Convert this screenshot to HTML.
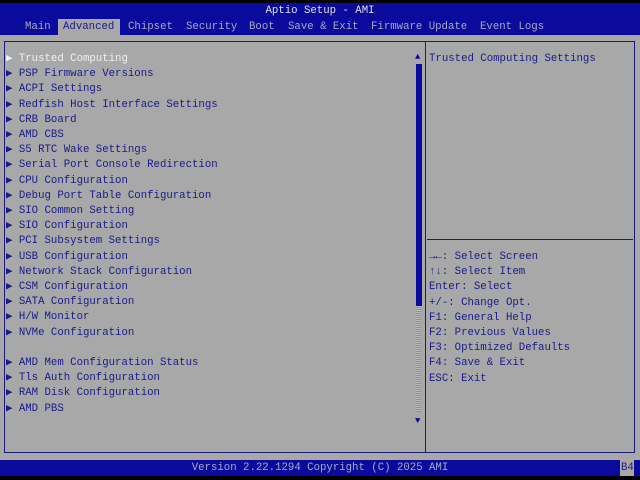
<!DOCTYPE html>
<html><head><style>
body{margin:0;width:640px;height:480px;background:#000;position:relative;overflow:hidden;font-family:"Liberation Mono","DejaVu Sans Mono",monospace;font-size:10.7px;}
div{position:absolute;white-space:pre;}
.t{line-height:15px;}
.tab{top:20px;line-height:15px;color:#a8a8c8}
</style></head><body>
<div style="left:0;top:3px;width:640px;height:32px;background:#0a0a9c"></div>
<div class="t" style="left:0;top:4px;width:640px;text-align:center;color:#e0e0e0">Aptio Setup - AMI</div>
<div style="left:58px;top:19px;width:62px;height:16px;background:#a8a8a8"></div>
<div class="tab" style="left:25px">Main</div>
<div class="tab" style="left:63px;color:#1a1a8a">Advanced</div>
<div class="tab" style="left:128px">Chipset</div>
<div class="tab" style="left:186px">Security</div>
<div class="tab" style="left:249px">Boot</div>
<div class="tab" style="left:288px">Save &amp; Exit</div>
<div class="tab" style="left:371px">Firmware Update</div>
<div class="tab" style="left:480px">Event Logs</div>
<div style="left:0;top:35px;width:640px;height:425px;background:#a8a8a8"></div>
<div style="left:4px;top:41px;width:629px;height:410px;border:1px solid #1a1a7a"></div>
<div style="left:425px;top:42px;width:1px;height:410px;background:#1a1a7a"></div>
<div style="left:427px;top:239px;width:206px;height:1px;background:#1a1a7a"></div>
<div style="left:415px;top:52px;font-size:9px;color:#0a0a9c">▲</div>
<div style="left:415px;top:416px;font-size:9px;color:#0a0a9c">▼</div>
<div style="left:416px;top:64px;width:6px;height:242px;background:#0a0a9c"></div>
<div style="left:416px;top:306px;width:6px;height:106px;background:repeating-linear-gradient(0deg,#909090 0 1px,#b8b8b8 1px 2px)"></div>
<div class="t" style="left:6px;top:52px;color:#1a1a8a;line-height:15.2px"><span style="color:#f0f0f0">▶ Trusted Computing</span>
▶ PSP Firmware Versions
▶ ACPI Settings
▶ Redfish Host Interface Settings
▶ CRB Board
▶ AMD CBS
▶ S5 RTC Wake Settings
▶ Serial Port Console Redirection
▶ CPU Configuration
▶ Debug Port Table Configuration
▶ SIO Common Setting
▶ SIO Configuration
▶ PCI Subsystem Settings
▶ USB Configuration
▶ Network Stack Configuration
▶ CSM Configuration
▶ SATA Configuration
▶ H/W Monitor
▶ NVMe Configuration

▶ AMD Mem Configuration Status
▶ Tls Auth Configuration
▶ RAM Disk Configuration
▶ AMD PBS</div>
<div class="t" style="left:429px;top:52px;color:#1a1a8a">Trusted Computing Settings</div>
<div class="t" style="left:429px;top:250px;color:#1a1a8a;line-height:15.2px">→←: Select Screen
↑↓: Select Item
Enter: Select
+/-: Change Opt.
F1: General Help
F2: Previous Values
F3: Optimized Defaults
F4: Save &amp; Exit
ESC: Exit</div>
<div style="left:0;top:460px;width:640px;height:16px;background:#0a0a9c"></div>
<div class="t" style="left:0;top:461px;width:640px;text-align:center;color:#a8a8c8">Version 2.22.1294 Copyright (C) 2025 AMI</div>
<div style="left:620px;top:460px;width:14px;height:16px;background:#a8a8a8"></div>
<div class="t" style="left:621px;top:461px;color:#1a1a8a">B4</div>
</body></html>
